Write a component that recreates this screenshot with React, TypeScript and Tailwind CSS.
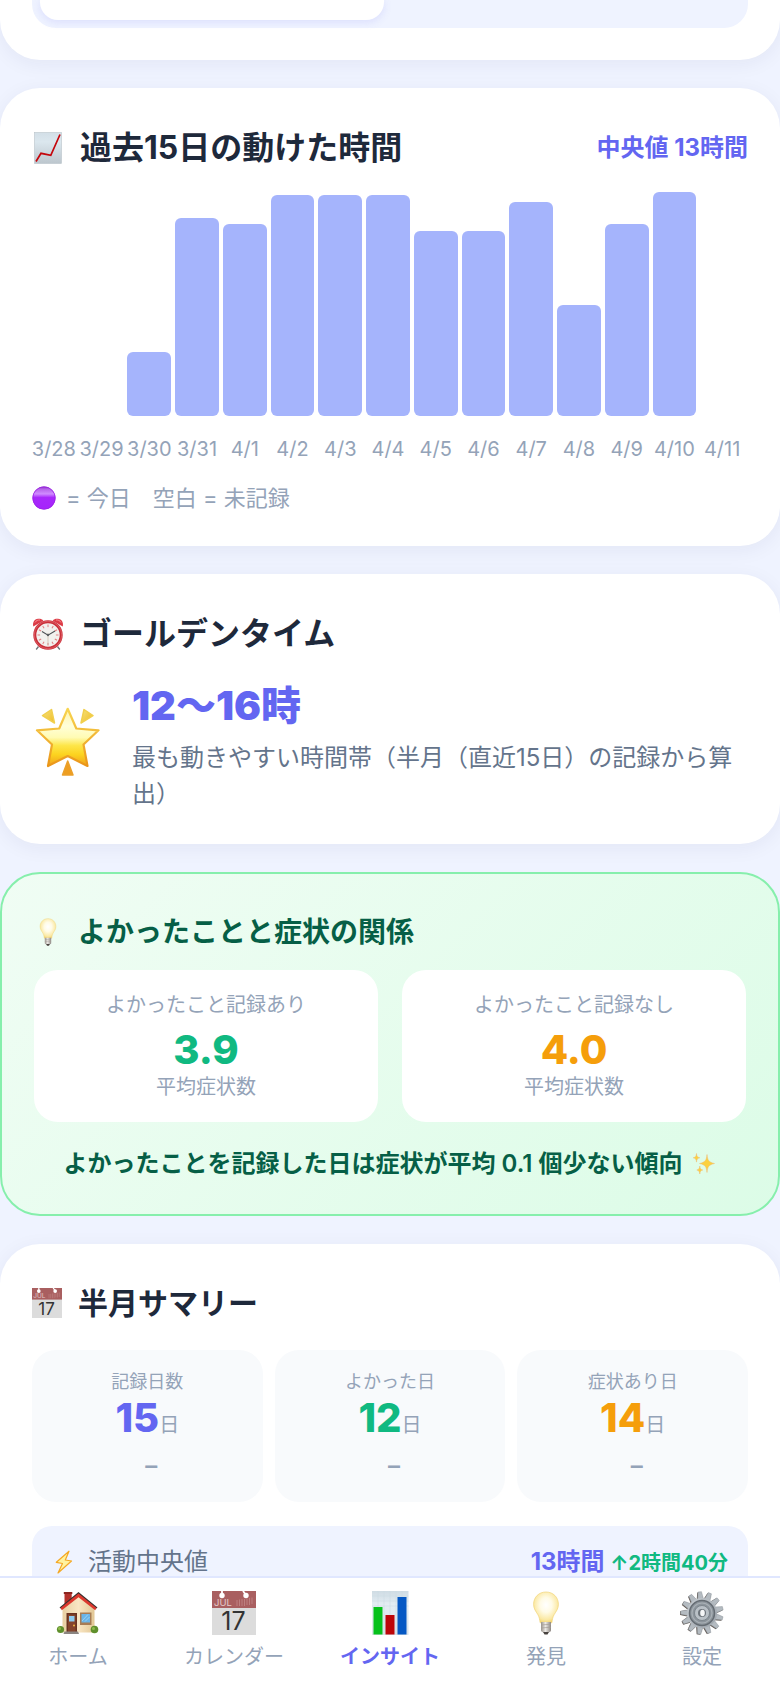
import type { ReactNode } from "react"
import clsx from "clsx"

interface IconProps {
  className?: string
}

const days = [
  { date: "3/28", hours: 0 },
  { date: "3/29", hours: 0 },
  { date: "3/30", hours: 4.33 },
  { date: "3/31", hours: 13.4 },
  { date: "4/1", hours: 13 },
  { date: "4/2", hours: 15 },
  { date: "4/3", hours: 15 },
  { date: "4/4", hours: 15 },
  { date: "4/5", hours: 12.5 },
  { date: "4/6", hours: 12.5 },
  { date: "4/7", hours: 14.5 },
  { date: "4/8", hours: 7.5 },
  { date: "4/9", hours: 13 },
  { date: "4/10", hours: 15.17 },
  { date: "4/11", hours: 0 },
]

const maxHours = Math.max(...days.map((day) => day.hours))

const relation = [
  { label: "よかったこと記録あり", value: "3.9", color: "text-[#10b981]" },
  { label: "よかったこと記録なし", value: "4.0", color: "text-[#f59e0b]" },
]

const summary = [
  { label: "記録日数", value: 15, color: "text-[#6366f1]" },
  { label: "よかった日", value: 12, color: "text-[#10b981]" },
  { label: "症状あり日", value: 14, color: "text-[#f59e0b]" },
]

function TrendIcon({ className }: IconProps) {
  return (
    <svg viewBox="0 0 32 32" className={className} aria-hidden="true">
      <defs>
        <linearGradient id="trend-bg" x1="0" y1="0" x2="0" y2="1">
          <stop offset="0" stopColor="#d3dfe7" />
          <stop offset="0.3" stopColor="#dbe7ee" />
          <stop offset="1" stopColor="#bcc6cd" />
        </linearGradient>
      </defs>
      <rect x="2.5" y="0.5" width="27" height="31" fill="url(#trend-bg)" stroke="#b9c3ca" strokeWidth="0.6" />
      <path d="M4 29.5 9 21.3 18.8 23.3 28 2.5" fill="none" stroke="#c4060c" strokeWidth="1.7" />
    </svg>
  )
}

function AlarmIcon({ className }: IconProps) {
  return (
    <svg viewBox="0 0 32 32" className={className} aria-hidden="true">
      <path d="m6.5 28.5-2.3 3M25.5 28.5l2.3 3" stroke="#6d7278" strokeWidth="1.3" />
      <path d="M1.3 8.6C.2 4.6 2.4 1.2 6 .8c2.200-.2 4.200.4 5.300 1.900z" fill="#dc3a45" />
      <path d="M30.700 8.600C31.800 4.600 29.600 1.200 26 .8c-2.200-.2-4.200.4-5.300 1.900z" fill="#dc3a45" />
      <path d="M3 4.500C4 2.500 6 1.800 8 2M29 4.500C28 2.500 26 1.800 24 2" fill="none" stroke="#f58d92" strokeWidth="1" />
      <circle cx="16" cy="17" r="13.200" fill="#f2f1ee" stroke="#c9303a" strokeWidth="3" />
      <circle cx="16" cy="17" r="13.800" fill="none" stroke="#e9767b" strokeWidth="0.600" />
      {Array.from({ length: 12 }, (_, i) => (
        <path key={i} d="M16 6.500v2.600" stroke="#e07f82" strokeWidth="1" transform={`rotate(${i * 30} 16 17)`} />
      ))}
      <path d="m10 13.500 6 3.700 7-4.200" fill="none" stroke="#4b4f53" strokeWidth="1.100" />
      <path d="M16 15v12" stroke="#c9b7a5" strokeWidth="0.700" />
      <circle cx="16" cy="17" r="1.200" fill="#5c6063" />
    </svg>
  )
}

function GlowingStarIcon({ className }: IconProps) {
  return (
    <svg viewBox="0 0 76 76" className={className} aria-hidden="true">
      <defs>
        <linearGradient id="star-fill" x1="0" y1="0" x2="0" y2="1">
          <stop offset="0" stopColor="#fff3a8" />
          <stop offset="0.300" stopColor="#ffffd9" />
          <stop offset="0.500" stopColor="#fffbb4" />
          <stop offset="0.640" stopColor="#fde64a" />
          <stop offset="0.800" stopColor="#fcd31f" />
          <stop offset="1" stopColor="#f0a01c" />
        </linearGradient>
        <linearGradient id="star-edge" x1="0" y1="0" x2="0" y2="1">
          <stop offset="0" stopColor="#f8d550" />
          <stop offset="1" stopColor="#ea9519" />
        </linearGradient>
        <linearGradient id="star-ray" x1="0" y1="0" x2="1" y2="1">
          <stop offset="0" stopColor="#f5e27a" />
          <stop offset="1" stopColor="#f0bb25" />
        </linearGradient>
      </defs>
      <g strokeLinejoin="round" strokeWidth="1.500">
        <path d="m10.500 9.500 9-6 3 13.500z" fill="url(#star-ray)" stroke="#f1cf4d" />
        <path d="m61 9.500-9-6-3 13.500z" fill="url(#star-ray)" stroke="#f1cf4d" />
        <path d="m35.700 55 5.300 14H30.500z" fill="#ee9e20" stroke="#eba02a" />
      </g>
      <path
        d="M35.700 2.800 44.300 22.500 66.500 24.300 51.500 38.500 55.500 60 35.700 50 16 60 20 38.500 5 24.300 27.200 22.500z"
        fill="url(#star-fill)"
        stroke="url(#star-edge)"
        strokeWidth="2.200"
        strokeLinejoin="round"
      />
    </svg>
  )
}

function BulbIcon({ className }: IconProps) {
  return (
    <svg viewBox="0 0 44 44" className={className} aria-hidden="true">
      <defs>
        <radialGradient id="bulb-glass" cx="0.500" cy="0.420" r="0.600">
          <stop offset="0" stopColor="#ffffff" />
          <stop offset="0.400" stopColor="#fffbe6" />
          <stop offset="0.800" stopColor="#fbe9a4" />
          <stop offset="1" stopColor="#f2d26c" />
        </radialGradient>
        <linearGradient id="bulb-base" x1="0" y1="0" x2="1" y2="0">
          <stop offset="0" stopColor="#99938c" />
          <stop offset="0.450" stopColor="#ebe8e4" />
          <stop offset="1" stopColor="#8d8782" />
        </linearGradient>
      </defs>
      <path
        d="M22 1C14.800 1 9.600 6.300 9.600 13.200c0 4.600 2.200 7 4.300 10.500 1.500 2.500 1.700 5 2.300 8.100h11.600c.6-3.100.8-5.600 2.300-8.100 2.100-3.500 4.300-5.900 4.300-10.500C34.400 6.300 29.200 1 22 1z"
        fill="url(#bulb-glass)"
        stroke="#f0d47a"
        strokeWidth="0.700"
      />
      <path d="M17 31h10v8.500c0 1-1.500 1.800-2.500 1.800h-5c-1 0-2.500-.8-2.500-1.800z" fill="url(#bulb-base)" />
      <path d="m17 34 10-.8M17 37l10-.8" stroke="#a39c95" strokeWidth="0.700" />
      <path d="M19 41h6l-1.500 2.500h-3z" fill="#48433f" />
    </svg>
  )
}

function SparklesIcon({ className }: IconProps) {
  return (
    <svg viewBox="0 0 24 24" className={className} aria-hidden="true">
      <g fill="#fbd13f" stroke="#efb877" strokeWidth="0.500">
        <path d="M15 2.500c.6 5.500 1.500 7.700 7.500 9-6 1.300-6.900 3.500-7.500 9-.6-5.500-1.500-7.700-7.500-9 6-1.300 6.900-3.500 7.500-9z" />
        <path d="M4.500 1.500c.3 2.800.9 3.600 3.300 4.300-2.400.7-3 1.500-3.300 4.300-.3-2.800-.9-3.600-3.300-4.300 2.400-.7 3-1.500 3.300-4.300z" />
        <path d="M7.800 14c.3 2.500.8 3.300 3 4-2.200.7-2.700 1.500-3 4-.3-2.500-.8-3.300-3-4 2.200-.7 2.700-1.500 3-4z" />
      </g>
    </svg>
  )
}

function CalendarIcon({ className }: IconProps) {
  return (
    <svg viewBox="0 0 44 44" className={className} aria-hidden="true">
      <rect width="44" height="44" fill="#dcdcdc" />
      <rect width="44" height="17" fill="#a95f60" />
      <path d="M10 0v4M31 0l3 4" stroke="#fff" strokeWidth="1.800" />
      <circle cx="10" cy="4.500" r="2.700" fill="#fff" />
      <circle cx="34" cy="4.500" r="2.700" fill="#fff" />
      <path d="M25 9v6M27.500 8.500V15M30 8v7M32.500 8v7M35 7.500V14M37.500 7v7M40 6.500V13" stroke="#bd8080" strokeWidth="1" />
      <text x="2" y="15" fontSize="9.500" fill="#e3caca" className="font-['Inter'] font-normal">JUL</text>
      <text x="21.500" y="39" fontSize="25" fill="#333" textAnchor="middle" className="font-['Inter'] font-normal">17</text>
    </svg>
  )
}

function BoltIcon({ className }: IconProps) {
  return (
    <svg viewBox="0 0 24 24" className={className} aria-hidden="true">
      <path
        d="M17 1.200 4.300 12.300l6.200 1.200L6 23 19.500 11l-6.200-1z"
        fill="#fff3a0"
        stroke="#f5a823"
        strokeWidth="1.200"
        strokeLinejoin="round"
      />
    </svg>
  )
}

function PurpleCircleIcon({ className }: IconProps) {
  return (
    <svg viewBox="0 0 24 24" className={className} aria-hidden="true">
      <defs>
        <linearGradient id="dot-shine" x1="0" y1="0" x2="0" y2="1">
          <stop offset="0" stopColor="#8c2fc4" />
          <stop offset="0.120" stopColor="#b765ea" />
          <stop offset="0.320" stopColor="#d08cff" />
          <stop offset="0.480" stopColor="#a828fb" />
          <stop offset="1" stopColor="#a524fb" />
        </linearGradient>
      </defs>
      <circle cx="12" cy="12" r="11.500" fill="url(#dot-shine)" />
      <circle cx="12" cy="12" r="11.200" fill="none" stroke="#9a22e4" strokeWidth="0.800" />
    </svg>
  )
}

function HouseIcon({ className }: IconProps) {
  return (
    <svg viewBox="0 0 44 44" className={className} aria-hidden="true">
      <defs>
        <linearGradient id="house-wall" x1="0" y1="0" x2="1" y2="0">
          <stop offset="0" stopColor="#e8cfa2" />
          <stop offset="0.500" stopColor="#f9e6c4" />
          <stop offset="1" stopColor="#e2c795" />
        </linearGradient>
      </defs>
      <path d="M8.500 1.500h7.200V14H8.500z" fill="#b3302b" />
      <path d="M7.800 1h8.500v2H7.800z" fill="#8b241f" />
      <path d="M6.500 16 22.500 3l16 13v25.500h-32z" fill="url(#house-wall)" />
      <path d="M3.500 16.500 22.500 1 41.500 16.500l-2 1.500L22.500 4.700 5.500 18z" fill="#35312f" />
      <path d="M4.500 17 22.500 2.500 40.500 17l-1.300 2.300L22.500 6.300 5.800 19.300z" fill="#dc382e" />
      <path d="M10.500 22h10.500v20H10.500z" fill="#6a3320" />
      <path d="M12 23.500h7.500V41H12z" fill="#85442c" />
      <path d="M13 25h5.500v5.500H13z" fill="#8ecbef" />
      <circle cx="18" cy="34.500" r="1" fill="#f0b643" />
      <path d="M24 21.500h11.500V34H24z" fill="#a77c55" />
      <path d="M25.500 23h8.500v8.500h-8.500z" fill="#69b4e8" />
      <path d="m26 30 6-6.500M29 30.500l4.500-4.500" stroke="#9bd3f5" strokeWidth="1" />
      <circle cx="4.500" cy="38.500" r="3.600" fill="#5f8f2c" />
      <circle cx="3.500" cy="37.500" r="1.500" fill="#8fbb4c" />
      <circle cx="38.500" cy="38.500" r="3.800" fill="#5f8f2c" />
      <circle cx="37.500" cy="37.500" r="1.500" fill="#8fbb4c" />
      <path d="M8.500 40.500h13.500l1 2.500H7.500z" fill="#8b8581" />
    </svg>
  )
}

function BarsIcon({ className }: IconProps) {
  return (
    <svg viewBox="0 0 44 44" className={className} aria-hidden="true">
      <defs>
        <linearGradient id="bars-bg" x1="0" y1="0" x2="0" y2="1">
          <stop offset="0" stopColor="#cfdce4" />
          <stop offset="0.300" stopColor="#e3edf3" />
          <stop offset="1" stopColor="#dae3e9" />
        </linearGradient>
      </defs>
      <rect x="4" width="36.500" height="44" fill="url(#bars-bg)" />
      <path d="M4 5h36.500M4 10h36.500M4 15h36.500M10 0v44M16 0v44M22 0v44M28 0v44M34 0v44" stroke="#cbd8e1" strokeWidth="0.500" />
      <rect x="5.500" y="16" width="9" height="27.500" fill="#06c11b" />
      <rect x="17.500" y="24" width="9" height="19.500" fill="#bd0508" />
      <rect x="29.500" y="6" width="9" height="37.500" fill="#0558c4" />
    </svg>
  )
}

function GearIcon({ className }: IconProps) {
  return (
    <svg viewBox="0 0 44 44" className={className} aria-hidden="true">
      <defs>
        <linearGradient id="gear-metal" x1="0" y1="0" x2="1" y2="1">
          <stop offset="0" stopColor="#c6ccd1" />
          <stop offset="1" stopColor="#9ba2a9" />
        </linearGradient>
      </defs>
      <g fill="#5f564f">
        {Array.from({ length: 13 }, (_, i) => (
          <path key={i} d="M18.800 8 20.200.8h3.600L25.200 8z" transform={`translate(-0.700 0.500) rotate(${(i * 360) / 13 - 6} 22 22)`} />
        ))}
      </g>
      <g fill="#b4bbc1" stroke="#858c93" strokeWidth="0.400">
        {Array.from({ length: 13 }, (_, i) => (
          <path key={i} d="M19 8.500 20.300.7h3.400L25 8.500z" transform={`rotate(${(i * 360) / 13 - 6} 22 22)`} />
        ))}
      </g>
      <circle cx="22" cy="22" r="15" fill="url(#gear-metal)" />
      <circle cx="22" cy="22" r="12.500" fill="#8c949b" stroke="#656c73" strokeWidth="1.500" />
      <circle cx="22" cy="22" r="10" fill="none" stroke="#a9b0b6" strokeWidth="1.200" />
      <circle cx="22" cy="22" r="7.500" fill="#b9c0c6" stroke="#747c84" strokeWidth="0.800" />
      <circle cx="22" cy="22" r="4" fill="#6c737a" />
      <ellipse cx="22.500" cy="22" rx="2.300" ry="3.200" fill="#f5f6f7" />
    </svg>
  )
}

const tabs = [
  { label: "ホーム", icon: HouseIcon },
  { label: "カレンダー", icon: CalendarIcon },
  { label: "インサイト", icon: BarsIcon, active: true },
  { label: "発見", icon: BulbIcon },
  { label: "設定", icon: GearIcon },
]

function Card({ children }: { children: ReactNode }) {
  return (
    <section className="shrink-0 rounded-[40px] bg-white p-8 shadow-[0_4px_20px_rgba(30,41,90,0.06)]">
      {children}
    </section>
  )
}

function ActivityChart() {
  return (
    <Card>
      <div className="flex items-center justify-between">
        <h2 className="flex items-center gap-4 text-[32px] leading-14 font-bold text-[#1e293b]">
          <TrendIcon className="size-8" />
          過去15日の動けた時間
        </h2>
        <p className="text-2xl font-bold text-[#6366f1]">中央値 13時間</p>
      </div>
      <div className="mt-4 grid h-56 grid-cols-15 items-end">
        {days.map((day) => (
          <div key={day.date} className="flex h-full items-end pr-1">
            <div className="w-full rounded-md bg-[#a5b4fc]" style={{ height: `${(day.hours / maxHours) * 100}%` }} />
          </div>
        ))}
      </div>
      <div className="mt-5 grid grid-cols-15 text-xl leading-[26px] text-[#94a3b8]">
        {days.map((day) => (
          <div key={day.date} className="flex justify-center pr-1 whitespace-nowrap">{day.date}</div>
        ))}
      </div>
      <p className="mt-5 flex items-center gap-2.5 text-[22px] leading-8 text-[#94a3b8]">
        <PurpleCircleIcon className="size-6" />
        = 今日　空白 = 未記録
      </p>
    </Card>
  )
}

function GoldenTime() {
  return (
    <Card>
      <h2 className="flex items-center gap-4 text-[32px] leading-14 font-bold text-[#1e293b]">
        <AlarmIcon className="size-8" />
        ゴールデンタイム
      </h2>
      <div className="mt-3.5 flex items-center gap-6">
        <GlowingStarIcon className="size-[76px] shrink-0" />
        <div>
          <p className="text-[40px] leading-15 font-black text-[#6366f1]">12〜16時</p>
          <p className="mt-1 text-2xl leading-9 text-[#64748b]">
            最も動きやすい時間帯（半月（直近15日）の記録から算出）
          </p>
        </div>
      </div>
    </Card>
  )
}

function SymptomRelation() {
  return (
    <section className="shrink-0 rounded-[40px] border-2 border-[#86efac] bg-linear-135 from-[#f0fdf4] to-[#dcfce7] p-8 text-[#065f46]">
      <h2 className="flex items-center gap-4 text-[28px] leading-[52px] font-bold">
        <BulbIcon className="size-7" />
        よかったことと症状の関係
      </h2>
      <div className="mt-3 grid grid-cols-2 gap-6">
        {relation.map((item) => (
          <div key={item.label} className="rounded-3xl bg-white p-5 text-center text-xl leading-[30px] text-[#94a3b8]">
            <p>{item.label}</p>
            <p className={clsx("mt-2 text-[40px] leading-11 font-extrabold", item.color)}>{item.value}</p>
            <p>平均症状数</p>
          </div>
        ))}
      </div>
      <p className="mt-6 flex items-center justify-center gap-2.5 text-2xl leading-9 font-semibold">
        よかったことを記録した日は症状が平均 0.1 個少ない傾向
        <SparklesIcon className="size-6" />
      </p>
    </section>
  )
}

function HalfMonthSummary() {
  return (
    <Card>
      <h2 className="flex items-center gap-4 text-[30px] leading-[54px] font-bold text-[#1e293b]">
        <CalendarIcon className="size-[30px]" />
        半月サマリー
      </h2>
      <div className="mt-5 grid grid-cols-3 gap-3">
        {summary.map((item) => (
          <div key={item.label} className="rounded-3xl bg-[#f8fafc] py-[18px] text-center text-[#94a3b8]">
            <p className="text-lg leading-7">{item.label}</p>
            <p className={clsx("text-[40px] leading-11 font-extrabold", item.color)}>
              {item.value}
              <span className="text-xl leading-none font-normal text-[#94a3b8]">日</span>
            </p>
            <p className="mt-2 pl-2 text-2xl leading-9 font-semibold">–</p>
          </div>
        ))}
      </div>
      <div className="mt-6 flex items-center justify-between rounded-[20px] bg-[#eff3ff] px-5 py-[18px] text-2xl leading-9">
        <p className="flex items-center gap-3 text-[#64748b]">
          <BoltIcon className="size-6" />
          活動中央値
        </p>
        <p className="font-bold text-[#6366f1]">
          13時間 <span className="text-xl leading-none text-[#10b981]">↑2時間40分</span>
        </p>
      </div>
    </Card>
  )
}

function TabBar() {
  return (
    <nav className="grid h-28 shrink-0 grid-cols-5 border-t-2 border-[#e0e7ff] bg-white">
      {tabs.map(({ label, icon: Icon, active }) => (
        <button
          key={label}
          type="button"
          className={clsx(
            "flex flex-col items-center gap-1.5 pt-[13px] text-xl leading-8",
            active ? "font-bold text-[#6366f1]" : "text-[#94a3b8]"
          )}
        >
          <Icon className="size-11" />
          {label}
        </button>
      ))}
    </nav>
  )
}

export default function App() {
  return (
    <div className="flex h-screen flex-col bg-[#eff3ff] font-['Inter','Noto_Sans_CJK_JP',sans-serif]" lang="ja">
      <main className="flex min-h-0 flex-1 flex-col gap-7 overflow-hidden">
        <section className="shrink-0 rounded-b-[40px] bg-white px-8 pb-8 shadow-[0_4px_20px_rgba(30,41,90,0.06)]">
          <div className="grid grid-cols-2 gap-3 rounded-b-3xl bg-[#eff3ff] px-2 pb-2">
            <div className="h-5 rounded-b-[18px] bg-white shadow-[0_2px_8px_rgba(99,102,241,0.15)]" />
          </div>
        </section>
        <ActivityChart />
        <GoldenTime />
        <SymptomRelation />
        <HalfMonthSummary />
      </main>
      <TabBar />
    </div>
  )
}
